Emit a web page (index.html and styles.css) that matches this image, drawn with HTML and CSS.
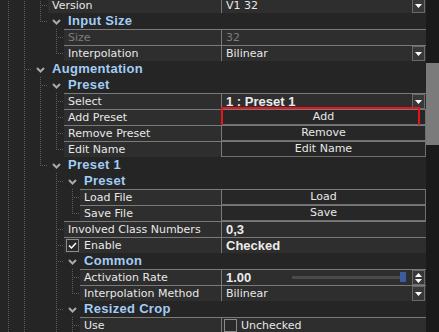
FILE: index.html
```html
<!DOCTYPE html>
<html lang="en">

<head>
    <meta charset="UTF-8">
    <title>Property Tree</title>
    <link rel="stylesheet" href="styles.css">
</head>

<body>
    <div class="panel">
        <div class="tree">
            <!-- Version -->
            <div class="row">
                <span class="ind line"></span><span class="ind line"></span><span class="ind branch"></span>
                <div class="name">Version</div>
                <div class="value"><span>V1 32</span>
                    <span class="drop"><svg width="7" height="4" viewBox="0 0 7 4"><path d="M0 0h7L3.5 4z" fill="#fff"/></svg></span>
                </div>
            </div>

            <!-- Input Size -->
            <div class="row group">
                <span class="ind line"></span><span class="ind line"></span><span class="ind last"></span>
                <span class="chev"><svg width="9" height="6" viewBox="0 0 9 6"><polyline points="1,1 4.5,4.5 8,1" fill="none" stroke="#a9a9a9" stroke-width="2"/></svg></span>
                <div class="label">Input Size</div>
            </div>
            <div class="row">
                <span class="ind line"></span><span class="ind line"></span><span class="ind"></span><span class="ind branch"></span>
                <div class="name disabled">Size</div>
                <div class="value disabled">32</div>
            </div>
            <div class="row">
                <span class="ind line"></span><span class="ind line"></span><span class="ind"></span><span class="ind last"></span>
                <div class="name">Interpolation</div>
                <div class="value"><span>Bilinear</span>
                    <span class="drop"><svg width="7" height="4" viewBox="0 0 7 4"><path d="M0 0h7L3.5 4z" fill="#fff"/></svg></span>
                </div>
            </div>

            <!-- Augmentation -->
            <div class="row group">
                <span class="ind line"></span><span class="ind branch"></span>
                <span class="chev"><svg width="9" height="6" viewBox="0 0 9 6"><polyline points="1,1 4.5,4.5 8,1" fill="none" stroke="#a9a9a9" stroke-width="2"/></svg></span>
                <div class="label">Augmentation</div>
            </div>
            <div class="row group">
                <span class="ind line"></span><span class="ind line"></span><span class="ind branch"></span>
                <span class="chev"><svg width="9" height="6" viewBox="0 0 9 6"><polyline points="1,1 4.5,4.5 8,1" fill="none" stroke="#a9a9a9" stroke-width="2"/></svg></span>
                <div class="label">Preset</div>
            </div>
            <div class="row">
                <span class="ind line"></span><span class="ind line"></span><span class="ind line"></span><span class="ind branch"></span>
                <div class="name">Select</div>
                <div class="value"><span class="strong">1 : Preset 1</span>
                    <span class="drop"><svg width="7" height="4" viewBox="0 0 7 4"><path d="M0 0h7L3.5 4z" fill="#fff"/></svg></span>
                </div>
            </div>
            <div class="row">
                <span class="ind line"></span><span class="ind line"></span><span class="ind line"></span><span class="ind branch"></span>
                <div class="name">Add Preset</div>
                <div class="value btn"><div class="button">Add</div><div class="focus"></div></div>
            </div>
            <div class="row">
                <span class="ind line"></span><span class="ind line"></span><span class="ind line"></span><span class="ind branch"></span>
                <div class="name">Remove Preset</div>
                <div class="value btn"><div class="button">Remove</div></div>
            </div>
            <div class="row">
                <span class="ind line"></span><span class="ind line"></span><span class="ind line"></span><span class="ind last"></span>
                <div class="name">Edit Name</div>
                <div class="value btn"><div class="button">Edit Name</div></div>
            </div>

            <!-- Preset 1 -->
            <div class="row group">
                <span class="ind line"></span><span class="ind line"></span><span class="ind last"></span>
                <span class="chev"><svg width="9" height="6" viewBox="0 0 9 6"><polyline points="1,1 4.5,4.5 8,1" fill="none" stroke="#a9a9a9" stroke-width="2"/></svg></span>
                <div class="label">Preset 1</div>
            </div>
            <div class="row group">
                <span class="ind line"></span><span class="ind line"></span><span class="ind"></span><span class="ind branch"></span>
                <span class="chev"><svg width="9" height="6" viewBox="0 0 9 6"><polyline points="1,1 4.5,4.5 8,1" fill="none" stroke="#a9a9a9" stroke-width="2"/></svg></span>
                <div class="label">Preset</div>
            </div>
            <div class="row">
                <span class="ind line"></span><span class="ind line"></span><span class="ind"></span><span class="ind line"></span><span class="ind branch"></span>
                <div class="name">Load File</div>
                <div class="value btn"><div class="button">Load</div></div>
            </div>
            <div class="row">
                <span class="ind line"></span><span class="ind line"></span><span class="ind"></span><span class="ind line"></span><span class="ind last"></span>
                <div class="name">Save File</div>
                <div class="value btn"><div class="button">Save</div></div>
            </div>
            <div class="row">
                <span class="ind line"></span><span class="ind line"></span><span class="ind"></span><span class="ind branch"></span>
                <div class="name">Involved Class Numbers</div>
                <div class="value"><span class="strong">0,3</span></div>
            </div>
            <div class="row">
                <span class="ind line"></span><span class="ind line"></span><span class="ind"></span><span class="ind branch"></span>
                <div class="name check-name">
                    <span class="box"><svg width="11" height="11" viewBox="0 0 11 11"><polyline points="2,5.5 4.5,8 9,3" fill="none" stroke="#fff" stroke-width="1.5"/></svg></span>Enable
                </div>
                <div class="value"><span class="strong">Checked</span></div>
            </div>

            <!-- Common -->
            <div class="row group">
                <span class="ind line"></span><span class="ind line"></span><span class="ind"></span><span class="ind branch"></span>
                <span class="chev"><svg width="9" height="6" viewBox="0 0 9 6"><polyline points="1,1 4.5,4.5 8,1" fill="none" stroke="#a9a9a9" stroke-width="2"/></svg></span>
                <div class="label">Common</div>
            </div>
            <div class="row">
                <span class="ind line"></span><span class="ind line"></span><span class="ind"></span><span class="ind line"></span><span class="ind branch"></span>
                <div class="name">Activation Rate</div>
                <div class="value"><span class="strong">1.00</span>
                    <span class="slider"><span class="knob"></span></span>
                    <span class="spin"><svg width="7" height="10" viewBox="0 0 7 10"><path d="M0 4h7L3.5 0z M0 6h7L3.5 10z" fill="#fff"/></svg></span>
                </div>
            </div>
            <div class="row">
                <span class="ind line"></span><span class="ind line"></span><span class="ind"></span><span class="ind line"></span><span class="ind last"></span>
                <div class="name">Interpolation Method</div>
                <div class="value"><span>Bilinear</span>
                    <span class="drop"><svg width="7" height="4" viewBox="0 0 7 4"><path d="M0 0h7L3.5 4z" fill="#fff"/></svg></span>
                </div>
            </div>

            <!-- Resized Crop -->
            <div class="row group">
                <span class="ind line"></span><span class="ind line"></span><span class="ind"></span><span class="ind branch"></span>
                <span class="chev"><svg width="9" height="6" viewBox="0 0 9 6"><polyline points="1,1 4.5,4.5 8,1" fill="none" stroke="#a9a9a9" stroke-width="2"/></svg></span>
                <div class="label">Resized Crop</div>
            </div>
            <div class="row">
                <span class="ind line"></span><span class="ind line"></span><span class="ind"></span><span class="ind line"></span><span class="ind branch"></span>
                <div class="name">Use</div>
                <div class="value"><span class="box empty"></span>Unchecked</div>
            </div>
        </div>

        <div class="scrollbar">
            <div class="thumb"></div>
        </div>
    </div>
</body>

</html>
```

FILE: styles.css
```css
/* General */
body {
    margin: 0;
    background: #1a1a1a;
    font-family: "DejaVu Sans", "Liberation Sans", sans-serif;
    font-size: 11px;
    color: #e8e8e8;
    overflow: hidden;
}

.panel {
    display: flex;
    width: 439px;
    height: 332px;
    overflow: hidden;
}

.tree {
    width: 426px;
    flex: none;
    margin-top: -3px;
    background: #252525;
}

/* Rows */
.row {
    display: flex;
    height: 16px;
    white-space: nowrap;
}

/* Tree guides */
.ind {
    width: 16px;
    flex: none;
}

.ind.line {
    background: repeating-linear-gradient(to bottom, #5e5e5e 0 1px, transparent 1px 2px) 8px 0 / 1px 100% no-repeat;
}

.ind.branch {
    background:
        repeating-linear-gradient(to bottom, #5e5e5e 0 1px, transparent 1px 2px) 8px 0 / 1px 100% no-repeat,
        repeating-linear-gradient(to right, #5e5e5e 0 1px, transparent 1px 2px) 10px 8px / 5px 1px no-repeat;
}

.ind.last {
    background:
        repeating-linear-gradient(to bottom, #5e5e5e 0 1px, transparent 1px 2px) 8px 0 / 1px 9px no-repeat,
        repeating-linear-gradient(to right, #5e5e5e 0 1px, transparent 1px 2px) 10px 8px / 5px 1px no-repeat;
}

/* Group header rows */
.chev {
    width: 16px;
    flex: none;
}

.chev svg {
    display: block;
    margin: 6px 0 0 4px;
}

.label {
    padding-left: 4px;
    font-family: "Liberation Sans", Arial, sans-serif;
    font-size: 13px;
    font-weight: bold;
    letter-spacing: 0.3px;
    line-height: 16px;
    color: #a3ccf6;
}

/* Property rows */
.name {
    flex: 1;
    min-width: 0;
    box-sizing: border-box;
    padding-left: 4px;
    background: #2e2e2e;
    border-top: 1px solid #7a7a7a;
    line-height: 15px;
    overflow: hidden;
}

.value {
    width: 205px;
    flex: none;
    box-sizing: border-box;
    display: flex;
    align-items: center;
    padding-left: 4px;
    background: #2e2e2e;
    border-top: 1px solid #7a7a7a;
    border-left: 1px solid #7a7a7a;
    line-height: 15px;
    position: relative;
}

.disabled {
    color: #7c7c7c;
}

.strong {
    font-family: "Liberation Sans", Arial, sans-serif;
    font-size: 13px;
    font-weight: bold;
    color: #ececec;
}

/* Drop-down and spin buttons */
.drop,
.spin {
    width: 13px;
    height: 15px;
    box-sizing: border-box;
    margin-left: auto;
    margin-right: 1px;
    border: 1px solid #6a6a6a;
    background: #383838;
    display: flex;
    align-items: center;
    justify-content: center;
}

.spin {
    margin-left: 7px;
}

/* Slider */
.slider {
    width: 113px;
    height: 3px;
    margin-left: auto;
    background: #4b4b4b;
    position: relative;
}

.knob {
    position: absolute;
    right: -1px;
    top: -4px;
    width: 6px;
    height: 10px;
    background: #3d5c9e;
}

/* Button cells */
.value.btn {
    padding-left: 0;
    align-items: stretch;
}

.button {
    flex: 1;
    text-align: center;
    line-height: 14px;
    background: #272727;
    border-right: 1px solid #6e6e6e;
    border-bottom: 1px solid #6e6e6e;
}

.focus {
    position: absolute;
    left: -1px;
    right: 6px;
    top: -3px;
    bottom: -2px;
    border: 2px solid #e3161e;
}

/* Checkboxes */
.check-name {
    display: flex;
    align-items: center;
    padding-left: 2px;
}

.box {
    width: 13px;
    height: 13px;
    box-sizing: border-box;
    border: 1px solid #8a8a8a;
    background: #2a2a2a;
    margin-right: 5px;
    display: flex;
    align-items: center;
    justify-content: center;
    flex: none;
}

.box.empty {
    margin-left: -2px;
    margin-right: 4px;
}

/* Scrollbar */
.scrollbar {
    width: 13px;
    flex: none;
    background: #1a1a1a;
}

.thumb {
    margin-top: 63px;
    height: 82px;
    background: #7b7b7b;
}
```
